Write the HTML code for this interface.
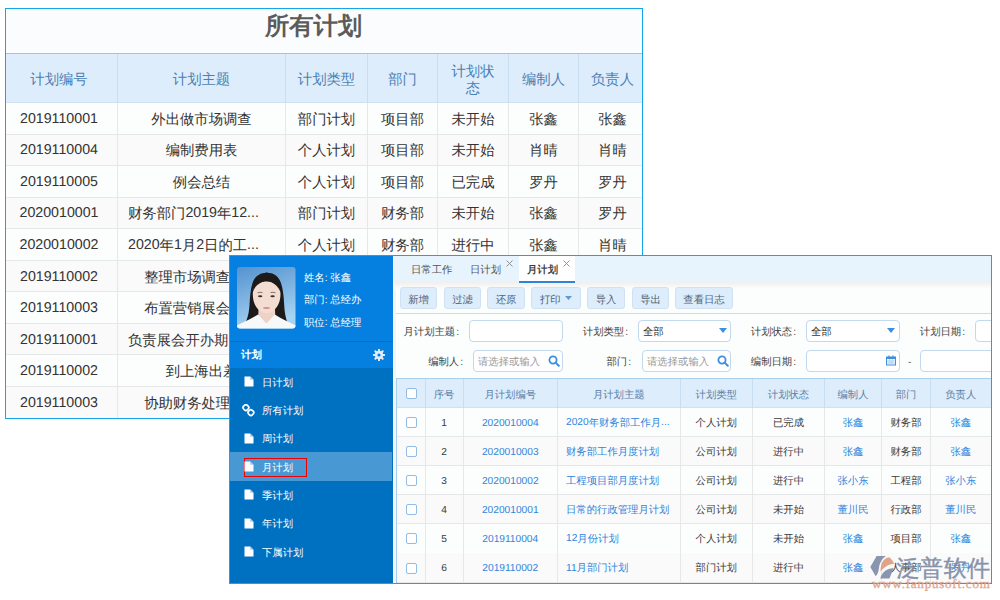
<!DOCTYPE html><html><head><meta charset="utf-8"><style>
*{margin:0;padding:0;box-sizing:border-box}
html,body{width:1000px;height:600px;overflow:hidden;background:#fff;font-family:"Liberation Sans", sans-serif;text-rendering:geometricPrecision}
.a{position:absolute}
.c{position:absolute;display:flex;align-items:center;justify-content:center;white-space:nowrap;text-align:center}
.l{position:absolute;display:flex;align-items:center;white-space:nowrap}
.r{position:absolute;display:flex;align-items:center;justify-content:flex-end;white-space:nowrap}
</style></head><body>

<div class="a" style="left:5.00px;top:8.00px;width:638.00px;height:411.00px;background:#fbfcfd;border:1px solid #14a6ea"></div>
<div class="c" style="left:6.00px;top:3.30px;width:615px;height:44.00px;font-size:24.3px;color:#5b5b5b;font-weight:bold"><span><span style="font-size:24.3px;letter-spacing:0px;position:relative;top:1.5px">所有计划</span></span></div>
<div class="a" style="left:6.00px;top:53.00px;width:636.00px;height:1.00px;background:#98c6ec;"></div>
<div class="a" style="left:6.00px;top:54.00px;width:636.00px;height:48.00px;background:#deedfb;"></div>
<div class="a" style="left:6.00px;top:102.00px;width:636.00px;height:1.00px;background:#d0e2f2;"></div>
<div class="a" style="left:6.00px;top:102.50px;width:636.00px;height:31.56px;background:#fcfdfd;"></div>
<div class="a" style="left:6.00px;top:134.06px;width:636.00px;height:31.56px;background:#fafafa;"></div>
<div class="a" style="left:6.00px;top:133.56px;width:636.00px;height:1.00px;background:#e6e7e8;"></div>
<div class="a" style="left:6.00px;top:165.62px;width:636.00px;height:31.56px;background:#fcfdfd;"></div>
<div class="a" style="left:6.00px;top:165.12px;width:636.00px;height:1.00px;background:#e6e7e8;"></div>
<div class="a" style="left:6.00px;top:197.18px;width:636.00px;height:31.56px;background:#fafafa;"></div>
<div class="a" style="left:6.00px;top:196.68px;width:636.00px;height:1.00px;background:#e6e7e8;"></div>
<div class="a" style="left:6.00px;top:228.74px;width:636.00px;height:31.56px;background:#fcfdfd;"></div>
<div class="a" style="left:6.00px;top:228.24px;width:636.00px;height:1.00px;background:#e6e7e8;"></div>
<div class="a" style="left:6.00px;top:260.30px;width:636.00px;height:31.56px;background:#fafafa;"></div>
<div class="a" style="left:6.00px;top:259.80px;width:636.00px;height:1.00px;background:#e6e7e8;"></div>
<div class="a" style="left:6.00px;top:291.86px;width:636.00px;height:31.56px;background:#fcfdfd;"></div>
<div class="a" style="left:6.00px;top:291.36px;width:636.00px;height:1.00px;background:#e6e7e8;"></div>
<div class="a" style="left:6.00px;top:323.42px;width:636.00px;height:31.56px;background:#fafafa;"></div>
<div class="a" style="left:6.00px;top:322.92px;width:636.00px;height:1.00px;background:#e6e7e8;"></div>
<div class="a" style="left:6.00px;top:354.98px;width:636.00px;height:31.56px;background:#fcfdfd;"></div>
<div class="a" style="left:6.00px;top:354.48px;width:636.00px;height:1.00px;background:#e6e7e8;"></div>
<div class="a" style="left:6.00px;top:386.54px;width:636.00px;height:31.56px;background:#fafafa;"></div>
<div class="a" style="left:6.00px;top:386.04px;width:636.00px;height:1.00px;background:#e6e7e8;"></div>
<div class="a" style="left:117.00px;top:54.00px;width:1.00px;height:48.00px;background:#c8ddf0;"></div>
<div class="a" style="left:117.00px;top:103.00px;width:1.00px;height:315.00px;background:#e6e7e8;"></div>
<div class="a" style="left:285.00px;top:54.00px;width:1.00px;height:48.00px;background:#c8ddf0;"></div>
<div class="a" style="left:285.00px;top:103.00px;width:1.00px;height:315.00px;background:#e6e7e8;"></div>
<div class="a" style="left:367.00px;top:54.00px;width:1.00px;height:48.00px;background:#c8ddf0;"></div>
<div class="a" style="left:367.00px;top:103.00px;width:1.00px;height:315.00px;background:#e6e7e8;"></div>
<div class="a" style="left:437.00px;top:54.00px;width:1.00px;height:48.00px;background:#c8ddf0;"></div>
<div class="a" style="left:437.00px;top:103.00px;width:1.00px;height:315.00px;background:#e6e7e8;"></div>
<div class="a" style="left:508.00px;top:54.00px;width:1.00px;height:48.00px;background:#c8ddf0;"></div>
<div class="a" style="left:508.00px;top:103.00px;width:1.00px;height:315.00px;background:#e6e7e8;"></div>
<div class="a" style="left:578.00px;top:54.00px;width:1.00px;height:48.00px;background:#c8ddf0;"></div>
<div class="a" style="left:578.00px;top:103.00px;width:1.00px;height:315.00px;background:#e6e7e8;"></div>
<div class="c" style="left:3.50px;top:55.00px;width:111px;height:48.00px;font-size:14.2px;color:#4b7fb4;line-height:17.5px"><span><span style="font-size:14.35px;letter-spacing:0px;position:relative;top:1.5px">计划编号</span></span></div>
<div class="c" style="left:118.00px;top:55.00px;width:167px;height:48.00px;font-size:14.2px;color:#4b7fb4;line-height:17.5px"><span><span style="font-size:14.35px;letter-spacing:0px;position:relative;top:1.5px">计划主题</span></span></div>
<div class="c" style="left:286.00px;top:55.00px;width:81px;height:48.00px;font-size:14.2px;color:#4b7fb4;line-height:17.5px"><span><span style="font-size:14.35px;letter-spacing:0px;position:relative;top:1.5px">计划类型</span></span></div>
<div class="c" style="left:368.00px;top:55.00px;width:69px;height:48.00px;font-size:14.2px;color:#4b7fb4;line-height:17.5px"><span><span style="font-size:14.35px;letter-spacing:0px;position:relative;top:1.5px">部门</span></span></div>
<div class="c" style="left:438.00px;top:55.50px;width:70px;height:48.00px;font-size:14.2px;color:#4b7fb4;line-height:17.5px"><span><span style="font-size:14.35px;letter-spacing:0px;position:relative;top:1.5px">计划状</span><br><span style="font-size:14.35px;letter-spacing:0px;position:relative;top:1.5px">态</span></span></div>
<div class="c" style="left:509.00px;top:55.00px;width:69px;height:48.00px;font-size:14.2px;color:#4b7fb4;line-height:17.5px"><span><span style="font-size:14.35px;letter-spacing:0px;position:relative;top:1.5px">编制人</span></span></div>
<div class="c" style="left:581.00px;top:55.00px;width:63px;height:48.00px;font-size:14.2px;color:#4b7fb4;line-height:17.5px"><span><span style="font-size:14.35px;letter-spacing:0px;position:relative;top:1.5px">负责人</span></span></div>
<div class="c" style="left:3.50px;top:103.00px;width:111px;height:31.56px;font-size:14.2px;color:#333;"><span><span style="font-size:14.2px;position:relative;top:0.0px">2019110001</span></span></div>
<div class="c" style="left:118.00px;top:103.00px;width:167px;height:31.56px;font-size:14.2px;color:#333;"><span><span style="font-size:14.35px;letter-spacing:0px;position:relative;top:1.5px">外出做市场调查</span></span></div>
<div class="c" style="left:286.00px;top:103.00px;width:81px;height:31.56px;font-size:14.2px;color:#333;"><span><span style="font-size:14.35px;letter-spacing:0px;position:relative;top:1.5px">部门计划</span></span></div>
<div class="c" style="left:368.00px;top:103.00px;width:69px;height:31.56px;font-size:14.2px;color:#333;"><span><span style="font-size:14.35px;letter-spacing:0px;position:relative;top:1.5px">项目部</span></span></div>
<div class="c" style="left:438.00px;top:103.00px;width:70px;height:31.56px;font-size:14.2px;color:#333;"><span><span style="font-size:14.35px;letter-spacing:0px;position:relative;top:1.5px">未开始</span></span></div>
<div class="c" style="left:509.00px;top:103.00px;width:69px;height:31.56px;font-size:14.2px;color:#333;"><span><span style="font-size:14.35px;letter-spacing:0px;position:relative;top:1.5px">张鑫</span></span></div>
<div class="c" style="left:581.00px;top:103.00px;width:63px;height:31.56px;font-size:14.2px;color:#333;"><span><span style="font-size:14.35px;letter-spacing:0px;position:relative;top:1.5px">张鑫</span></span></div>
<div class="c" style="left:3.50px;top:134.56px;width:111px;height:31.56px;font-size:14.2px;color:#333;"><span><span style="font-size:14.2px;position:relative;top:0.0px">2019110004</span></span></div>
<div class="c" style="left:118.00px;top:134.56px;width:167px;height:31.56px;font-size:14.2px;color:#333;"><span><span style="font-size:14.35px;letter-spacing:0px;position:relative;top:1.5px">编制费用表</span></span></div>
<div class="c" style="left:286.00px;top:134.56px;width:81px;height:31.56px;font-size:14.2px;color:#333;"><span><span style="font-size:14.35px;letter-spacing:0px;position:relative;top:1.5px">个人计划</span></span></div>
<div class="c" style="left:368.00px;top:134.56px;width:69px;height:31.56px;font-size:14.2px;color:#333;"><span><span style="font-size:14.35px;letter-spacing:0px;position:relative;top:1.5px">项目部</span></span></div>
<div class="c" style="left:438.00px;top:134.56px;width:70px;height:31.56px;font-size:14.2px;color:#333;"><span><span style="font-size:14.35px;letter-spacing:0px;position:relative;top:1.5px">未开始</span></span></div>
<div class="c" style="left:509.00px;top:134.56px;width:69px;height:31.56px;font-size:14.2px;color:#333;"><span><span style="font-size:14.35px;letter-spacing:0px;position:relative;top:1.5px">肖晴</span></span></div>
<div class="c" style="left:581.00px;top:134.56px;width:63px;height:31.56px;font-size:14.2px;color:#333;"><span><span style="font-size:14.35px;letter-spacing:0px;position:relative;top:1.5px">肖晴</span></span></div>
<div class="c" style="left:3.50px;top:166.12px;width:111px;height:31.56px;font-size:14.2px;color:#333;"><span><span style="font-size:14.2px;position:relative;top:0.0px">2019110005</span></span></div>
<div class="c" style="left:118.00px;top:166.12px;width:167px;height:31.56px;font-size:14.2px;color:#333;"><span><span style="font-size:14.35px;letter-spacing:0px;position:relative;top:1.5px">例会总结</span></span></div>
<div class="c" style="left:286.00px;top:166.12px;width:81px;height:31.56px;font-size:14.2px;color:#333;"><span><span style="font-size:14.35px;letter-spacing:0px;position:relative;top:1.5px">个人计划</span></span></div>
<div class="c" style="left:368.00px;top:166.12px;width:69px;height:31.56px;font-size:14.2px;color:#333;"><span><span style="font-size:14.35px;letter-spacing:0px;position:relative;top:1.5px">项目部</span></span></div>
<div class="c" style="left:438.00px;top:166.12px;width:70px;height:31.56px;font-size:14.2px;color:#333;"><span><span style="font-size:14.35px;letter-spacing:0px;position:relative;top:1.5px">已完成</span></span></div>
<div class="c" style="left:509.00px;top:166.12px;width:69px;height:31.56px;font-size:14.2px;color:#333;"><span><span style="font-size:14.35px;letter-spacing:0px;position:relative;top:1.5px">罗丹</span></span></div>
<div class="c" style="left:581.00px;top:166.12px;width:63px;height:31.56px;font-size:14.2px;color:#333;"><span><span style="font-size:14.35px;letter-spacing:0px;position:relative;top:1.5px">罗丹</span></span></div>
<div class="c" style="left:3.50px;top:197.68px;width:111px;height:31.56px;font-size:14.2px;color:#333;"><span><span style="font-size:14.2px;position:relative;top:0.0px">2020010001</span></span></div>
<div class="l" style="left:128.00px;top:197.68px;height:31.56px;font-size:14.2px;color:#333;"><span><span style="font-size:14.35px;letter-spacing:0px;position:relative;top:1.5px">财务部门</span><span style="font-size:14.2px;position:relative;top:0.0px">2019</span><span style="font-size:14.35px;letter-spacing:0px;position:relative;top:1.5px">年</span><span style="font-size:14.2px;position:relative;top:0.0px">12...</span></span></div>
<div class="c" style="left:286.00px;top:197.68px;width:81px;height:31.56px;font-size:14.2px;color:#333;"><span><span style="font-size:14.35px;letter-spacing:0px;position:relative;top:1.5px">部门计划</span></span></div>
<div class="c" style="left:368.00px;top:197.68px;width:69px;height:31.56px;font-size:14.2px;color:#333;"><span><span style="font-size:14.35px;letter-spacing:0px;position:relative;top:1.5px">财务部</span></span></div>
<div class="c" style="left:438.00px;top:197.68px;width:70px;height:31.56px;font-size:14.2px;color:#333;"><span><span style="font-size:14.35px;letter-spacing:0px;position:relative;top:1.5px">未开始</span></span></div>
<div class="c" style="left:509.00px;top:197.68px;width:69px;height:31.56px;font-size:14.2px;color:#333;"><span><span style="font-size:14.35px;letter-spacing:0px;position:relative;top:1.5px">张鑫</span></span></div>
<div class="c" style="left:581.00px;top:197.68px;width:63px;height:31.56px;font-size:14.2px;color:#333;"><span><span style="font-size:14.35px;letter-spacing:0px;position:relative;top:1.5px">罗丹</span></span></div>
<div class="c" style="left:3.50px;top:229.24px;width:111px;height:31.56px;font-size:14.2px;color:#333;"><span><span style="font-size:14.2px;position:relative;top:0.0px">2020010002</span></span></div>
<div class="l" style="left:128.00px;top:229.24px;height:31.56px;font-size:14.2px;color:#333;"><span><span style="font-size:14.2px;position:relative;top:0.0px">2020</span><span style="font-size:14.35px;letter-spacing:0px;position:relative;top:1.5px">年</span><span style="font-size:14.2px;position:relative;top:0.0px">1</span><span style="font-size:14.35px;letter-spacing:0px;position:relative;top:1.5px">月</span><span style="font-size:14.2px;position:relative;top:0.0px">2</span><span style="font-size:14.35px;letter-spacing:0px;position:relative;top:1.5px">日的工</span><span style="font-size:14.2px;position:relative;top:0.0px">...</span></span></div>
<div class="c" style="left:286.00px;top:229.24px;width:81px;height:31.56px;font-size:14.2px;color:#333;"><span><span style="font-size:14.35px;letter-spacing:0px;position:relative;top:1.5px">个人计划</span></span></div>
<div class="c" style="left:368.00px;top:229.24px;width:69px;height:31.56px;font-size:14.2px;color:#333;"><span><span style="font-size:14.35px;letter-spacing:0px;position:relative;top:1.5px">财务部</span></span></div>
<div class="c" style="left:438.00px;top:229.24px;width:70px;height:31.56px;font-size:14.2px;color:#333;"><span><span style="font-size:14.35px;letter-spacing:0px;position:relative;top:1.5px">进行中</span></span></div>
<div class="c" style="left:509.00px;top:229.24px;width:69px;height:31.56px;font-size:14.2px;color:#333;"><span><span style="font-size:14.35px;letter-spacing:0px;position:relative;top:1.5px">张鑫</span></span></div>
<div class="c" style="left:581.00px;top:229.24px;width:63px;height:31.56px;font-size:14.2px;color:#333;"><span><span style="font-size:14.35px;letter-spacing:0px;position:relative;top:1.5px">肖晴</span></span></div>
<div class="c" style="left:3.50px;top:260.80px;width:111px;height:31.56px;font-size:14.2px;color:#333;"><span><span style="font-size:14.2px;position:relative;top:0.0px">2019110002</span></span></div>
<div class="c" style="left:118.00px;top:260.80px;width:167px;height:31.56px;font-size:14.2px;color:#333;"><span><span style="font-size:14.35px;letter-spacing:0px;position:relative;top:1.5px">整理市场调查报告</span></span></div>
<div class="c" style="left:286.00px;top:260.80px;width:81px;height:31.56px;font-size:14.2px;color:#333;"><span><span style="font-size:14.35px;letter-spacing:0px;position:relative;top:1.5px">部门计划</span></span></div>
<div class="c" style="left:368.00px;top:260.80px;width:69px;height:31.56px;font-size:14.2px;color:#333;"><span><span style="font-size:14.35px;letter-spacing:0px;position:relative;top:1.5px">项目部</span></span></div>
<div class="c" style="left:438.00px;top:260.80px;width:70px;height:31.56px;font-size:14.2px;color:#333;"><span><span style="font-size:14.35px;letter-spacing:0px;position:relative;top:1.5px">进行中</span></span></div>
<div class="c" style="left:509.00px;top:260.80px;width:69px;height:31.56px;font-size:14.2px;color:#333;"><span><span style="font-size:14.35px;letter-spacing:0px;position:relative;top:1.5px">张鑫</span></span></div>
<div class="c" style="left:581.00px;top:260.80px;width:63px;height:31.56px;font-size:14.2px;color:#333;"><span><span style="font-size:14.35px;letter-spacing:0px;position:relative;top:1.5px">张鑫</span></span></div>
<div class="c" style="left:3.50px;top:292.36px;width:111px;height:31.56px;font-size:14.2px;color:#333;"><span><span style="font-size:14.2px;position:relative;top:0.0px">2019110003</span></span></div>
<div class="c" style="left:118.00px;top:292.36px;width:167px;height:31.56px;font-size:14.2px;color:#333;"><span><span style="font-size:14.35px;letter-spacing:0px;position:relative;top:1.5px">布置营销展会场地</span></span></div>
<div class="c" style="left:286.00px;top:292.36px;width:81px;height:31.56px;font-size:14.2px;color:#333;"><span><span style="font-size:14.35px;letter-spacing:0px;position:relative;top:1.5px">部门计划</span></span></div>
<div class="c" style="left:368.00px;top:292.36px;width:69px;height:31.56px;font-size:14.2px;color:#333;"><span><span style="font-size:14.35px;letter-spacing:0px;position:relative;top:1.5px">项目部</span></span></div>
<div class="c" style="left:438.00px;top:292.36px;width:70px;height:31.56px;font-size:14.2px;color:#333;"><span><span style="font-size:14.35px;letter-spacing:0px;position:relative;top:1.5px">未开始</span></span></div>
<div class="c" style="left:509.00px;top:292.36px;width:69px;height:31.56px;font-size:14.2px;color:#333;"><span><span style="font-size:14.35px;letter-spacing:0px;position:relative;top:1.5px">肖晴</span></span></div>
<div class="c" style="left:581.00px;top:292.36px;width:63px;height:31.56px;font-size:14.2px;color:#333;"><span><span style="font-size:14.35px;letter-spacing:0px;position:relative;top:1.5px">肖晴</span></span></div>
<div class="c" style="left:3.50px;top:323.92px;width:111px;height:31.56px;font-size:14.2px;color:#333;"><span><span style="font-size:14.2px;position:relative;top:0.0px">2019110001</span></span></div>
<div class="l" style="left:128.00px;top:323.92px;height:31.56px;font-size:14.2px;color:#333;"><span><span style="font-size:14.35px;letter-spacing:0px;position:relative;top:1.5px">负责展会开办期</span><span style="font-size:14.2px;position:relative;top:0.0px">...</span></span></div>
<div class="c" style="left:286.00px;top:323.92px;width:81px;height:31.56px;font-size:14.2px;color:#333;"><span><span style="font-size:14.35px;letter-spacing:0px;position:relative;top:1.5px">部门计划</span></span></div>
<div class="c" style="left:368.00px;top:323.92px;width:69px;height:31.56px;font-size:14.2px;color:#333;"><span><span style="font-size:14.35px;letter-spacing:0px;position:relative;top:1.5px">项目部</span></span></div>
<div class="c" style="left:438.00px;top:323.92px;width:70px;height:31.56px;font-size:14.2px;color:#333;"><span><span style="font-size:14.35px;letter-spacing:0px;position:relative;top:1.5px">未开始</span></span></div>
<div class="c" style="left:509.00px;top:323.92px;width:69px;height:31.56px;font-size:14.2px;color:#333;"><span><span style="font-size:14.35px;letter-spacing:0px;position:relative;top:1.5px">张鑫</span></span></div>
<div class="c" style="left:581.00px;top:323.92px;width:63px;height:31.56px;font-size:14.2px;color:#333;"><span><span style="font-size:14.35px;letter-spacing:0px;position:relative;top:1.5px">张鑫</span></span></div>
<div class="c" style="left:3.50px;top:355.48px;width:111px;height:31.56px;font-size:14.2px;color:#333;"><span><span style="font-size:14.2px;position:relative;top:0.0px">2019110002</span></span></div>
<div class="c" style="left:118.00px;top:355.48px;width:167px;height:31.56px;font-size:14.2px;color:#333;"><span><span style="font-size:14.35px;letter-spacing:0px;position:relative;top:1.5px">到上海出差</span></span></div>
<div class="c" style="left:286.00px;top:355.48px;width:81px;height:31.56px;font-size:14.2px;color:#333;"><span><span style="font-size:14.35px;letter-spacing:0px;position:relative;top:1.5px">个人计划</span></span></div>
<div class="c" style="left:368.00px;top:355.48px;width:69px;height:31.56px;font-size:14.2px;color:#333;"><span><span style="font-size:14.35px;letter-spacing:0px;position:relative;top:1.5px">项目部</span></span></div>
<div class="c" style="left:438.00px;top:355.48px;width:70px;height:31.56px;font-size:14.2px;color:#333;"><span><span style="font-size:14.35px;letter-spacing:0px;position:relative;top:1.5px">已完成</span></span></div>
<div class="c" style="left:509.00px;top:355.48px;width:69px;height:31.56px;font-size:14.2px;color:#333;"><span><span style="font-size:14.35px;letter-spacing:0px;position:relative;top:1.5px">罗丹</span></span></div>
<div class="c" style="left:581.00px;top:355.48px;width:63px;height:31.56px;font-size:14.2px;color:#333;"><span><span style="font-size:14.35px;letter-spacing:0px;position:relative;top:1.5px">罗丹</span></span></div>
<div class="c" style="left:3.50px;top:387.04px;width:111px;height:31.56px;font-size:14.2px;color:#333;"><span><span style="font-size:14.2px;position:relative;top:0.0px">2019110003</span></span></div>
<div class="c" style="left:118.00px;top:387.04px;width:167px;height:31.56px;font-size:14.2px;color:#333;"><span><span style="font-size:14.35px;letter-spacing:0px;position:relative;top:1.5px">协助财务处理账务</span></span></div>
<div class="c" style="left:286.00px;top:387.04px;width:81px;height:31.56px;font-size:14.2px;color:#333;"><span><span style="font-size:14.35px;letter-spacing:0px;position:relative;top:1.5px">个人计划</span></span></div>
<div class="c" style="left:368.00px;top:387.04px;width:69px;height:31.56px;font-size:14.2px;color:#333;"><span><span style="font-size:14.35px;letter-spacing:0px;position:relative;top:1.5px">财务部</span></span></div>
<div class="c" style="left:438.00px;top:387.04px;width:70px;height:31.56px;font-size:14.2px;color:#333;"><span><span style="font-size:14.35px;letter-spacing:0px;position:relative;top:1.5px">进行中</span></span></div>
<div class="c" style="left:509.00px;top:387.04px;width:69px;height:31.56px;font-size:14.2px;color:#333;"><span><span style="font-size:14.35px;letter-spacing:0px;position:relative;top:1.5px">肖晴</span></span></div>
<div class="c" style="left:581.00px;top:387.04px;width:63px;height:31.56px;font-size:14.2px;color:#333;"><span><span style="font-size:14.35px;letter-spacing:0px;position:relative;top:1.5px">肖晴</span></span></div>
<div class="a" style="left:229.00px;top:255.00px;width:763.00px;height:329.00px;background:#fcfdfd;border:1px solid #14a6ea"></div>
<div class="a" style="left:230.00px;top:256.00px;width:163.00px;height:85.00px;background:#0680e0;"></div>
<div class="a" style="left:230.00px;top:341.00px;width:163.00px;height:1.00px;background:#0b6cc0;"></div>
<div class="a" style="left:230.00px;top:342.00px;width:163.00px;height:25.50px;background:#0680e0;"></div>
<div class="a" style="left:230.00px;top:367.50px;width:163.00px;height:215.50px;background:#0070c0;"></div>
<div class="a" style="left:393.00px;top:256.00px;width:1.00px;height:327.00px;background:#ffffff;"></div>
<div class="a" style="left:394.00px;top:256.00px;width:2.00px;height:327.00px;background:#eef5fb;"></div>
<svg class="a" style="left:237px;top:267px" width="59" height="62" viewBox="0 0 59 62">
<defs><linearGradient id="pg" x1="0" y1="0" x2="0.3" y2="1"><stop offset="0" stop-color="#5592cf"/><stop offset="1" stop-color="#a6d4f3"/></linearGradient>
<clipPath id="pc"><rect x="0" y="0" width="58.5" height="61.5" rx="3"/></clipPath></defs>
<g clip-path="url(#pc)">
<rect width="59" height="62" fill="url(#pg)"/>
<path d="M30 5.7 C22 5.7 17.5 10 15.5 16 C13.5 22 13 30 12.5 38 C12 46 10.5 51 8.5 56 L50.5 56 C48.5 50 47.5 45 47.2 38 C46.8 30 46 22 44 16 C42 10 38 5.7 30 5.7Z" fill="#1d1a1a"/>
<path d="M21.5 42 L21 57 L38.5 57 L38 42Z" fill="#efd2c6"/>
<path d="M15.8 27 C15.8 19 21 14.5 29.5 14.5 C38 14.5 43.5 19 43.5 27 C43.5 34 41 41 35 44.5 C32 46.5 27 46.5 24 44.5 C18 41 15.8 34 15.8 27Z" fill="#f3dcd2"/>
<path d="M30 5.5 C23 7 18 12 15.8 25 C18 19 22 15.5 30 13.5Z M29.5 5.5 C36 7 41.5 12 43.5 25 C41 19 37 15.5 29.5 13.5Z" fill="#1d1a1a"/>
<path d="M20.5 25.8 Q23 24.8 25.5 25.6 M33.5 25.6 Q36 24.8 38.5 25.8" stroke="#6a5550" stroke-width="0.8" fill="none"/>
<ellipse cx="23.2" cy="29.2" rx="2.2" ry="1" fill="#3b2c28"/>
<ellipse cx="35.6" cy="29.2" rx="2.2" ry="1" fill="#3b2c28"/>
<ellipse cx="29.5" cy="41" rx="3.4" ry="1.1" fill="#dc8e94"/>
<path d="M0 62 L0 58.5 C6 55 14 52 21 47.5 L29.4 56.5 L37.8 47.5 C45 52 52 55 59 58.5 L59 62Z" fill="#f7f8fa"/>
</g></svg>
<div class="l" style="left:304.00px;top:269.50px;height:16.00px;font-size:10.2px;color:#fff;"><span><span style="font-size:10.35px;letter-spacing:0px;position:relative;top:1.6px">姓名</span><span style="font-size:10.2px;position:relative;top:1.0px">: </span><span style="font-size:10.35px;letter-spacing:0px;position:relative;top:1.6px">张鑫</span></span></div>
<div class="l" style="left:304.00px;top:291.80px;height:16.00px;font-size:10.2px;color:#fff;"><span><span style="font-size:10.35px;letter-spacing:0px;position:relative;top:1.6px">部门</span><span style="font-size:10.2px;position:relative;top:1.0px">: </span><span style="font-size:10.35px;letter-spacing:0px;position:relative;top:1.6px">总经办</span></span></div>
<div class="l" style="left:304.00px;top:314.00px;height:16.00px;font-size:10.2px;color:#fff;"><span><span style="font-size:10.35px;letter-spacing:0px;position:relative;top:1.6px">职位</span><span style="font-size:10.2px;position:relative;top:1.0px">: </span><span style="font-size:10.35px;letter-spacing:0px;position:relative;top:1.6px">总经理</span></span></div>
<div class="l" style="left:241.00px;top:341.80px;height:26.00px;font-size:10.4px;color:#fff;font-weight:bold"><span><span style="font-size:10.4px;letter-spacing:0px;position:relative;top:1.6px">计划</span></span></div>
<svg class="a" style="left:373px;top:349px" width="12" height="12" viewBox="0 0 12 12"><g fill="#e2edf9">
<circle cx="6" cy="6" r="4.2"/>
<g stroke="#e2edf9" stroke-width="2" stroke-linecap="round">
<line x1="6" y1="0.8" x2="6" y2="11.2"/><line x1="0.8" y1="6" x2="11.2" y2="6"/>
<line x1="2.3" y1="2.3" x2="9.7" y2="9.7"/><line x1="9.7" y1="2.3" x2="2.3" y2="9.7"/></g>
<circle cx="6" cy="6" r="1.6" fill="#0680e0"/></g></svg>
<svg class="a" style="left:244.3px;top:376.00px" width="10" height="11" viewBox="0 0 10 11"><path d="M0.5 0.5 H6.2 L9.5 3.8 V10.5 H0.5Z" fill="#fff"/><path d="M6.2 0.5 V3.8 H9.5Z" fill="#a9c9ec"/></svg>
<div class="l" style="left:262.00px;top:368.00px;height:28.30px;font-size:10.2px;color:#fff;"><span><span style="font-size:10.35px;letter-spacing:0px;position:relative;top:1.6px">日计划</span></span></div>
<svg class="a" style="left:242px;top:404.00px" width="13" height="13" viewBox="0 0 13 13"><g fill="none" stroke="#fff" stroke-width="1.7"><rect x="1.3" y="1" width="5.2" height="5.2" rx="2" transform="rotate(45 3.9 3.6)"/><rect x="6.3" y="6" width="5.2" height="5.2" rx="2" transform="rotate(45 8.9 8.6)"/></g></svg>
<div class="l" style="left:262.00px;top:396.30px;height:28.30px;font-size:10.2px;color:#fff;"><span><span style="font-size:10.35px;letter-spacing:0px;position:relative;top:1.6px">所有计划</span></span></div>
<svg class="a" style="left:244.3px;top:432.60px" width="10" height="11" viewBox="0 0 10 11"><path d="M0.5 0.5 H6.2 L9.5 3.8 V10.5 H0.5Z" fill="#fff"/><path d="M6.2 0.5 V3.8 H9.5Z" fill="#a9c9ec"/></svg>
<div class="l" style="left:262.00px;top:424.60px;height:28.30px;font-size:10.2px;color:#fff;"><span><span style="font-size:10.35px;letter-spacing:0px;position:relative;top:1.6px">周计划</span></span></div>
<div class="a" style="left:230.00px;top:452.40px;width:162.00px;height:28.30px;background:#4898d4;"></div>
<div class="a" style="left:244.00px;top:458.00px;width:63.00px;height:19.00px;background:transparent;border:1.4px solid #f00000"></div>
<svg class="a" style="left:244.3px;top:460.90px" width="10" height="11" viewBox="0 0 10 11"><path d="M0.5 0.5 H6.2 L9.5 3.8 V10.5 H0.5Z" fill="#fff"/><path d="M6.2 0.5 V3.8 H9.5Z" fill="#a9c9ec"/></svg>
<div class="l" style="left:262.00px;top:452.90px;height:28.30px;font-size:10.2px;color:#fff;"><span><span style="font-size:10.35px;letter-spacing:0px;position:relative;top:1.6px">月计划</span></span></div>
<svg class="a" style="left:244.3px;top:489.20px" width="10" height="11" viewBox="0 0 10 11"><path d="M0.5 0.5 H6.2 L9.5 3.8 V10.5 H0.5Z" fill="#fff"/><path d="M6.2 0.5 V3.8 H9.5Z" fill="#a9c9ec"/></svg>
<div class="l" style="left:262.00px;top:481.20px;height:28.30px;font-size:10.2px;color:#fff;"><span><span style="font-size:10.35px;letter-spacing:0px;position:relative;top:1.6px">季计划</span></span></div>
<svg class="a" style="left:244.3px;top:517.50px" width="10" height="11" viewBox="0 0 10 11"><path d="M0.5 0.5 H6.2 L9.5 3.8 V10.5 H0.5Z" fill="#fff"/><path d="M6.2 0.5 V3.8 H9.5Z" fill="#a9c9ec"/></svg>
<div class="l" style="left:262.00px;top:509.50px;height:28.30px;font-size:10.2px;color:#fff;"><span><span style="font-size:10.35px;letter-spacing:0px;position:relative;top:1.6px">年计划</span></span></div>
<svg class="a" style="left:244.3px;top:545.80px" width="10" height="11" viewBox="0 0 10 11"><path d="M0.5 0.5 H6.2 L9.5 3.8 V10.5 H0.5Z" fill="#fff"/><path d="M6.2 0.5 V3.8 H9.5Z" fill="#a9c9ec"/></svg>
<div class="l" style="left:262.00px;top:537.80px;height:28.30px;font-size:10.2px;color:#fff;"><span><span style="font-size:10.35px;letter-spacing:0px;position:relative;top:1.6px">下属计划</span></span></div>
<div class="a" style="left:394.00px;top:256.00px;width:597.00px;height:26.00px;background:#e8f4fd;"></div>
<div class="a" style="left:394.00px;top:282.00px;width:597.00px;height:7.00px;background:linear-gradient(#f1efed,#fcfdfd);"></div>
<div class="a" style="left:519.00px;top:256.00px;width:56.00px;height:26.00px;background:#fff;"></div>
<div class="a" style="left:519.00px;top:281.00px;width:56.00px;height:2.00px;background:#2f84d6;"></div>
<div class="l" style="left:411.00px;top:256.50px;height:26.00px;font-size:10.2px;color:#555;"><span><span style="font-size:10.35px;letter-spacing:0px;position:relative;top:1.6px">日常工作</span></span></div>
<div class="l" style="left:470.00px;top:256.50px;height:26.00px;font-size:10.2px;color:#555;"><span><span style="font-size:10.35px;letter-spacing:0px;position:relative;top:1.6px">日计划</span></span></div>
<div class="l" style="left:527.00px;top:256.50px;height:26.00px;font-size:10.2px;color:#2a2a2a;-webkit-text-stroke:0.25px #2a2a2a"><span><span style="font-size:10.35px;letter-spacing:0px;position:relative;top:1.6px">月计划</span></span></div>
<svg class="a" style="left:506px;top:259.5px" width="7" height="7" viewBox="0 0 7 7"><path d="M0.5 0.5 L6.5 6.5 M6.5 0.5 L0.5 6.5" stroke="#888" stroke-width="0.9"/></svg>
<svg class="a" style="left:563px;top:259.5px" width="7" height="7" viewBox="0 0 7 7"><path d="M0.5 0.5 L6.5 6.5 M6.5 0.5 L0.5 6.5" stroke="#888" stroke-width="0.9"/></svg>
<div class="a" style="left:400.00px;top:287.00px;width:37.00px;height:22.00px;background:#deedfb;border:1px solid #cfe2f4;border-radius:3px"></div>
<div class="c" style="left:400.00px;top:288.00px;width:37px;height:22.00px;font-size:10.2px;color:#4f6377;"><span><span style="font-size:10.35px;letter-spacing:0px;position:relative;top:1.6px">新增</span></span></div>
<div class="a" style="left:444.00px;top:287.00px;width:37.00px;height:22.00px;background:#deedfb;border:1px solid #cfe2f4;border-radius:3px"></div>
<div class="c" style="left:444.00px;top:288.00px;width:37px;height:22.00px;font-size:10.2px;color:#4f6377;"><span><span style="font-size:10.35px;letter-spacing:0px;position:relative;top:1.6px">过滤</span></span></div>
<div class="a" style="left:487.00px;top:287.00px;width:38.00px;height:22.00px;background:#deedfb;border:1px solid #cfe2f4;border-radius:3px"></div>
<div class="c" style="left:487.00px;top:288.00px;width:38px;height:22.00px;font-size:10.2px;color:#4f6377;"><span><span style="font-size:10.35px;letter-spacing:0px;position:relative;top:1.6px">还原</span></span></div>
<div class="a" style="left:531.00px;top:287.00px;width:50.00px;height:22.00px;background:#deedfb;border:1px solid #cfe2f4;border-radius:3px"></div>
<div class="l" style="left:540.00px;top:288.00px;height:22.00px;font-size:10.2px;color:#4f6377;"><span><span style="font-size:10.35px;letter-spacing:0px;position:relative;top:1.6px">打印</span></span></div>
<svg class="a" style="left:564.5px;top:296px" width="7" height="4" viewBox="0 0 7 4"><path d="M0 0 H7 L3.5 4Z" fill="#5b9bd9"/></svg>
<div class="a" style="left:587.00px;top:287.00px;width:38.00px;height:22.00px;background:#deedfb;border:1px solid #cfe2f4;border-radius:3px"></div>
<div class="c" style="left:587.00px;top:288.00px;width:38px;height:22.00px;font-size:10.2px;color:#4f6377;"><span><span style="font-size:10.35px;letter-spacing:0px;position:relative;top:1.6px">导入</span></span></div>
<div class="a" style="left:632.00px;top:287.00px;width:37.00px;height:22.00px;background:#deedfb;border:1px solid #cfe2f4;border-radius:3px"></div>
<div class="c" style="left:632.00px;top:288.00px;width:37px;height:22.00px;font-size:10.2px;color:#4f6377;"><span><span style="font-size:10.35px;letter-spacing:0px;position:relative;top:1.6px">导出</span></span></div>
<div class="a" style="left:675.00px;top:287.00px;width:58.00px;height:22.00px;background:#deedfb;border:1px solid #cfe2f4;border-radius:3px"></div>
<div class="c" style="left:675.00px;top:288.00px;width:58px;height:22.00px;font-size:10.2px;color:#4f6377;"><span><span style="font-size:10.35px;letter-spacing:0px;position:relative;top:1.6px">查看日志</span></span></div>
<div class="a" style="left:396.00px;top:313.00px;width:595.00px;height:1.00px;background:#c9dcee;"></div>
<div class="r" style="left:379.00px;top:324.50px;width:80px;height:16px;font-size:10.2px;color:#444"><span><span style="font-size:10.35px">月计划主题</span><span style="margin-left:1px">:</span></span></div>
<div class="a" style="left:469.00px;top:320.00px;width:94.00px;height:21.50px;background:#fff;border:1px solid #c2d8ed;border-radius:4px"></div>
<div class="r" style="left:383.00px;top:354.50px;width:80px;height:16px;font-size:10.2px;color:#444"><span><span style="font-size:10.35px">编制人</span><span style="margin-left:1px">:</span></span></div>
<div class="a" style="left:473.00px;top:350.00px;width:90.00px;height:21.50px;background:#fff;border:1px solid #c2d8ed;border-radius:4px"></div>
<div class="l" style="left:478.00px;top:353.50px;height:16.00px;font-size:10.2px;color:#999;"><span><span style="font-size:10.35px;letter-spacing:0px;position:relative;top:1.6px">请选择或输入</span></span></div>
<div class="r" style="left:548.00px;top:324.50px;width:80px;height:16px;font-size:10.2px;color:#444"><span><span style="font-size:10.35px">计划类型</span><span style="margin-left:1px">:</span></span></div>
<div class="a" style="left:638.00px;top:320.00px;width:93.00px;height:21.50px;background:#fff;border:1px solid #c2d8ed;border-radius:4px"></div>
<div class="l" style="left:643.00px;top:323.50px;height:16.00px;font-size:10.2px;color:#333;"><span><span style="font-size:10.35px;letter-spacing:0px;position:relative;top:1.6px">全部</span></span></div>
<div class="r" style="left:551.00px;top:354.50px;width:80px;height:16px;font-size:10.2px;color:#444"><span><span style="font-size:10.35px">部门</span><span style="margin-left:1px">:</span></span></div>
<div class="a" style="left:642.00px;top:350.00px;width:89.00px;height:21.50px;background:#fff;border:1px solid #c2d8ed;border-radius:4px"></div>
<div class="l" style="left:647.00px;top:353.50px;height:16.00px;font-size:10.2px;color:#999;"><span><span style="font-size:10.35px;letter-spacing:0px;position:relative;top:1.6px">请选择或输入</span></span></div>
<div class="r" style="left:716.00px;top:324.50px;width:80px;height:16px;font-size:10.2px;color:#444"><span><span style="font-size:10.35px">计划状态</span><span style="margin-left:1px">:</span></span></div>
<div class="a" style="left:806.00px;top:320.00px;width:94.00px;height:21.50px;background:#fff;border:1px solid #c2d8ed;border-radius:4px"></div>
<div class="l" style="left:811.00px;top:323.50px;height:16.00px;font-size:10.2px;color:#333;"><span><span style="font-size:10.35px;letter-spacing:0px;position:relative;top:1.6px">全部</span></span></div>
<div class="r" style="left:885.00px;top:324.50px;width:80px;height:16px;font-size:10.2px;color:#444"><span><span style="font-size:10.35px">计划日期</span><span style="margin-left:1px">:</span></span></div>
<div class="a" style="left:975.00px;top:320.00px;width:24.00px;height:21.50px;background:#fff;border:1px solid #c2d8ed;border-radius:4px"></div>
<div class="r" style="left:716.00px;top:354.50px;width:80px;height:16px;font-size:10.2px;color:#444"><span><span style="font-size:10.35px">编制日期</span><span style="margin-left:1px">:</span></span></div>
<div class="a" style="left:806.00px;top:350.00px;width:94.00px;height:21.50px;background:#fff;border:1px solid #c2d8ed;border-radius:4px"></div>
<div class="l" style="left:908.00px;top:353.50px;height:16.00px;font-size:10.2px;color:#555;"><span><span style="font-size:10.2px;position:relative;top:1.0px">-</span></span></div>
<div class="a" style="left:920.00px;top:350.00px;width:79.00px;height:21.50px;background:#fff;border:1px solid #c2d8ed;border-radius:4px"></div>
<svg class="a" style="left:719px;top:328px" width="8" height="5" viewBox="0 0 8 5"><path d="M0 0 H8 L4 5Z" fill="#3d8fe0"/></svg>
<svg class="a" style="left:887px;top:328px" width="8" height="5" viewBox="0 0 8 5"><path d="M0 0 H8 L4 5Z" fill="#3d8fe0"/></svg>
<svg class="a" style="left:547.5px;top:354.5px" width="12" height="12" viewBox="0 0 12 12"><circle cx="5" cy="5" r="3.6" fill="none" stroke="#3d8fe0" stroke-width="1.8"/><path d="M7.6 7.6 L10.8 10.8" stroke="#3d8fe0" stroke-width="2" stroke-linecap="round"/></svg>
<svg class="a" style="left:716.5px;top:354.5px" width="12" height="12" viewBox="0 0 12 12"><circle cx="5" cy="5" r="3.6" fill="none" stroke="#3d8fe0" stroke-width="1.8"/><path d="M7.6 7.6 L10.8 10.8" stroke="#3d8fe0" stroke-width="2" stroke-linecap="round"/></svg>
<svg class="a" style="left:886px;top:355px" width="10" height="11" viewBox="0 0 10 11"><rect x="0.5" y="2" width="9" height="8" fill="#fff" stroke="#3d8fe0" stroke-width="1"/><rect x="0.5" y="2" width="9" height="2" fill="#3d8fe0"/><path d="M3 0.5 V3 M7 0.5 V3" stroke="#3d8fe0" stroke-width="1.2"/><path d="M1 6 H9 M1 8 H9 M3.2 4 V10 M5 4 V10 M6.8 4 V10" stroke="#9cc5ee" stroke-width="0.7"/></svg>
<div class="a" style="left:992.00px;top:255.00px;width:8.00px;height:330.00px;background:#fff;"></div>
<div class="a" style="left:991.00px;top:255.00px;width:1.00px;height:329.00px;background:#14a6ea;"></div>
<div class="a" style="left:396.00px;top:378.00px;width:595.00px;height:1.00px;background:#a8cfee;"></div>
<div class="a" style="left:396.00px;top:378.00px;width:1.00px;height:205.00px;background:#a8cfee;"></div>
<div class="a" style="left:397.00px;top:379.00px;width:594.00px;height:28.50px;background:#deedfb;"></div>
<div class="a" style="left:397.00px;top:407.00px;width:594.00px;height:1.00px;background:#cfe1f2;"></div>
<div class="a" style="left:397.00px;top:407.50px;width:594.00px;height:29.10px;background:#fcfdfd;"></div>
<div class="a" style="left:397.00px;top:436.10px;width:594.00px;height:1.00px;background:#e6e7e8;"></div>
<div class="a" style="left:397.00px;top:436.60px;width:594.00px;height:29.10px;background:#fafafa;"></div>
<div class="a" style="left:397.00px;top:465.20px;width:594.00px;height:1.00px;background:#e6e7e8;"></div>
<div class="a" style="left:397.00px;top:465.70px;width:594.00px;height:29.10px;background:#fcfdfd;"></div>
<div class="a" style="left:397.00px;top:494.30px;width:594.00px;height:1.00px;background:#e6e7e8;"></div>
<div class="a" style="left:397.00px;top:494.80px;width:594.00px;height:29.10px;background:#fafafa;"></div>
<div class="a" style="left:397.00px;top:523.40px;width:594.00px;height:1.00px;background:#e6e7e8;"></div>
<div class="a" style="left:397.00px;top:523.90px;width:594.00px;height:29.10px;background:#fcfdfd;"></div>
<div class="a" style="left:397.00px;top:552.50px;width:594.00px;height:1.00px;background:#e6e7e8;"></div>
<div class="a" style="left:397.00px;top:553.00px;width:594.00px;height:29.10px;background:#fafafa;"></div>
<div class="a" style="left:397.00px;top:581.60px;width:594.00px;height:1.00px;background:#e6e7e8;"></div>
<div class="a" style="left:424.50px;top:379.00px;width:1.00px;height:28.50px;background:#c8ddf0;"></div>
<div class="a" style="left:424.50px;top:408.00px;width:1.00px;height:175.00px;background:#e6e7e8;"></div>
<div class="a" style="left:462.50px;top:379.00px;width:1.00px;height:28.50px;background:#c8ddf0;"></div>
<div class="a" style="left:462.50px;top:408.00px;width:1.00px;height:175.00px;background:#e6e7e8;"></div>
<div class="a" style="left:557.00px;top:379.00px;width:1.00px;height:28.50px;background:#c8ddf0;"></div>
<div class="a" style="left:557.00px;top:408.00px;width:1.00px;height:175.00px;background:#e6e7e8;"></div>
<div class="a" style="left:679.50px;top:379.00px;width:1.00px;height:28.50px;background:#c8ddf0;"></div>
<div class="a" style="left:679.50px;top:408.00px;width:1.00px;height:175.00px;background:#e6e7e8;"></div>
<div class="a" style="left:752.00px;top:379.00px;width:1.00px;height:28.50px;background:#c8ddf0;"></div>
<div class="a" style="left:752.00px;top:408.00px;width:1.00px;height:175.00px;background:#e6e7e8;"></div>
<div class="a" style="left:824.00px;top:379.00px;width:1.00px;height:28.50px;background:#c8ddf0;"></div>
<div class="a" style="left:824.00px;top:408.00px;width:1.00px;height:175.00px;background:#e6e7e8;"></div>
<div class="a" style="left:881.00px;top:379.00px;width:1.00px;height:28.50px;background:#c8ddf0;"></div>
<div class="a" style="left:881.00px;top:408.00px;width:1.00px;height:175.00px;background:#e6e7e8;"></div>
<div class="a" style="left:930.00px;top:379.00px;width:1.00px;height:28.50px;background:#c8ddf0;"></div>
<div class="a" style="left:930.00px;top:408.00px;width:1.00px;height:175.00px;background:#e6e7e8;"></div>
<div class="a" style="left:406.00px;top:388.00px;width:11.00px;height:11.00px;background:#fff;border:1px solid #8fbde6;border-radius:2px"></div>
<div class="c" style="left:425.00px;top:380.20px;width:38px;height:28.50px;font-size:10.2px;color:#5a7fa8;"><span><span style="font-size:10.35px;letter-spacing:0px;position:relative;top:1.6px">序号</span></span></div>
<div class="c" style="left:463.00px;top:380.20px;width:94.5px;height:28.50px;font-size:10.2px;color:#5a7fa8;"><span><span style="font-size:10.35px;letter-spacing:0px;position:relative;top:1.6px">月计划编号</span></span></div>
<div class="c" style="left:557.50px;top:380.20px;width:122.5px;height:28.50px;font-size:10.2px;color:#5a7fa8;"><span><span style="font-size:10.35px;letter-spacing:0px;position:relative;top:1.6px">月计划主题</span></span></div>
<div class="c" style="left:680.00px;top:380.20px;width:72.5px;height:28.50px;font-size:10.2px;color:#5a7fa8;"><span><span style="font-size:10.35px;letter-spacing:0px;position:relative;top:1.6px">计划类型</span></span></div>
<div class="c" style="left:752.50px;top:380.20px;width:72.0px;height:28.50px;font-size:10.2px;color:#5a7fa8;"><span><span style="font-size:10.35px;letter-spacing:0px;position:relative;top:1.6px">计划状态</span></span></div>
<div class="c" style="left:824.50px;top:380.20px;width:57.0px;height:28.50px;font-size:10.2px;color:#5a7fa8;"><span><span style="font-size:10.35px;letter-spacing:0px;position:relative;top:1.6px">编制人</span></span></div>
<div class="c" style="left:881.50px;top:380.20px;width:49.0px;height:28.50px;font-size:10.2px;color:#5a7fa8;"><span><span style="font-size:10.35px;letter-spacing:0px;position:relative;top:1.6px">部门</span></span></div>
<div class="c" style="left:930.50px;top:380.20px;width:60.5px;height:28.50px;font-size:10.2px;color:#5a7fa8;"><span><span style="font-size:10.35px;letter-spacing:0px;position:relative;top:1.6px">负责人</span></span></div>
<div class="a" style="left:406.00px;top:417.00px;width:11.00px;height:11.00px;background:#fff;border:1px solid #8fbde6;border-radius:2px"></div>
<div class="c" style="left:425.00px;top:407.50px;width:38px;height:29.10px;font-size:10.2px;color:#3a3a3a;"><span><span style="font-size:10.2px;position:relative;top:1.0px">1</span></span></div>
<div class="c" style="left:463.00px;top:407.50px;width:94.5px;height:29.10px;font-size:10.2px;color:#2f85dc;"><span><span style="font-size:10.2px;position:relative;top:1.0px">2020010004</span></span></div>
<div class="l" style="left:566.00px;top:407.50px;height:29.10px;font-size:10.2px;color:#2f85dc;"><span><span style="font-size:10.2px;position:relative;top:1.0px">2020</span><span style="font-size:10.35px;letter-spacing:0px;position:relative;top:1.6px">年财务部工作月</span><span style="font-size:10.2px;position:relative;top:1.0px">...</span></span></div>
<div class="c" style="left:680.00px;top:407.50px;width:72.5px;height:29.10px;font-size:10.2px;color:#3a3a3a;"><span><span style="font-size:10.35px;letter-spacing:0px;position:relative;top:1.6px">个人计划</span></span></div>
<div class="c" style="left:752.50px;top:407.50px;width:72.0px;height:29.10px;font-size:10.2px;color:#3a3a3a;"><span><span style="font-size:10.35px;letter-spacing:0px;position:relative;top:1.6px">已完成</span></span></div>
<div class="c" style="left:824.50px;top:407.50px;width:57.0px;height:29.10px;font-size:10.2px;color:#2f85dc;"><span><span style="font-size:10.35px;letter-spacing:0px;position:relative;top:1.6px">张鑫</span></span></div>
<div class="c" style="left:881.50px;top:407.50px;width:49.0px;height:29.10px;font-size:10.2px;color:#3a3a3a;"><span><span style="font-size:10.35px;letter-spacing:0px;position:relative;top:1.6px">财务部</span></span></div>
<div class="c" style="left:930.50px;top:407.50px;width:60.5px;height:29.10px;font-size:10.2px;color:#2f85dc;"><span><span style="font-size:10.35px;letter-spacing:0px;position:relative;top:1.6px">张鑫</span></span></div>
<div class="a" style="left:406.00px;top:446.10px;width:11.00px;height:11.00px;background:#fff;border:1px solid #8fbde6;border-radius:2px"></div>
<div class="c" style="left:425.00px;top:436.60px;width:38px;height:29.10px;font-size:10.2px;color:#3a3a3a;"><span><span style="font-size:10.2px;position:relative;top:1.0px">2</span></span></div>
<div class="c" style="left:463.00px;top:436.60px;width:94.5px;height:29.10px;font-size:10.2px;color:#2f85dc;"><span><span style="font-size:10.2px;position:relative;top:1.0px">2020010003</span></span></div>
<div class="l" style="left:566.00px;top:436.60px;height:29.10px;font-size:10.2px;color:#2f85dc;"><span><span style="font-size:10.35px;letter-spacing:0px;position:relative;top:1.6px">财务部工作月度计划</span></span></div>
<div class="c" style="left:680.00px;top:436.60px;width:72.5px;height:29.10px;font-size:10.2px;color:#3a3a3a;"><span><span style="font-size:10.35px;letter-spacing:0px;position:relative;top:1.6px">公司计划</span></span></div>
<div class="c" style="left:752.50px;top:436.60px;width:72.0px;height:29.10px;font-size:10.2px;color:#3a3a3a;"><span><span style="font-size:10.35px;letter-spacing:0px;position:relative;top:1.6px">进行中</span></span></div>
<div class="c" style="left:824.50px;top:436.60px;width:57.0px;height:29.10px;font-size:10.2px;color:#2f85dc;"><span><span style="font-size:10.35px;letter-spacing:0px;position:relative;top:1.6px">张鑫</span></span></div>
<div class="c" style="left:881.50px;top:436.60px;width:49.0px;height:29.10px;font-size:10.2px;color:#3a3a3a;"><span><span style="font-size:10.35px;letter-spacing:0px;position:relative;top:1.6px">财务部</span></span></div>
<div class="c" style="left:930.50px;top:436.60px;width:60.5px;height:29.10px;font-size:10.2px;color:#2f85dc;"><span><span style="font-size:10.35px;letter-spacing:0px;position:relative;top:1.6px">张鑫</span></span></div>
<div class="a" style="left:406.00px;top:475.20px;width:11.00px;height:11.00px;background:#fff;border:1px solid #8fbde6;border-radius:2px"></div>
<div class="c" style="left:425.00px;top:465.70px;width:38px;height:29.10px;font-size:10.2px;color:#3a3a3a;"><span><span style="font-size:10.2px;position:relative;top:1.0px">3</span></span></div>
<div class="c" style="left:463.00px;top:465.70px;width:94.5px;height:29.10px;font-size:10.2px;color:#2f85dc;"><span><span style="font-size:10.2px;position:relative;top:1.0px">2020010002</span></span></div>
<div class="l" style="left:566.00px;top:465.70px;height:29.10px;font-size:10.2px;color:#2f85dc;"><span><span style="font-size:10.35px;letter-spacing:0px;position:relative;top:1.6px">工程项目部月度计划</span></span></div>
<div class="c" style="left:680.00px;top:465.70px;width:72.5px;height:29.10px;font-size:10.2px;color:#3a3a3a;"><span><span style="font-size:10.35px;letter-spacing:0px;position:relative;top:1.6px">公司计划</span></span></div>
<div class="c" style="left:752.50px;top:465.70px;width:72.0px;height:29.10px;font-size:10.2px;color:#3a3a3a;"><span><span style="font-size:10.35px;letter-spacing:0px;position:relative;top:1.6px">进行中</span></span></div>
<div class="c" style="left:824.50px;top:465.70px;width:57.0px;height:29.10px;font-size:10.2px;color:#2f85dc;"><span><span style="font-size:10.35px;letter-spacing:0px;position:relative;top:1.6px">张小东</span></span></div>
<div class="c" style="left:881.50px;top:465.70px;width:49.0px;height:29.10px;font-size:10.2px;color:#3a3a3a;"><span><span style="font-size:10.35px;letter-spacing:0px;position:relative;top:1.6px">工程部</span></span></div>
<div class="c" style="left:930.50px;top:465.70px;width:60.5px;height:29.10px;font-size:10.2px;color:#2f85dc;"><span><span style="font-size:10.35px;letter-spacing:0px;position:relative;top:1.6px">张小东</span></span></div>
<div class="a" style="left:406.00px;top:504.30px;width:11.00px;height:11.00px;background:#fff;border:1px solid #8fbde6;border-radius:2px"></div>
<div class="c" style="left:425.00px;top:494.80px;width:38px;height:29.10px;font-size:10.2px;color:#3a3a3a;"><span><span style="font-size:10.2px;position:relative;top:1.0px">4</span></span></div>
<div class="c" style="left:463.00px;top:494.80px;width:94.5px;height:29.10px;font-size:10.2px;color:#2f85dc;"><span><span style="font-size:10.2px;position:relative;top:1.0px">2020010001</span></span></div>
<div class="l" style="left:566.00px;top:494.80px;height:29.10px;font-size:10.2px;color:#2f85dc;"><span><span style="font-size:10.35px;letter-spacing:0px;position:relative;top:1.6px">日常的行政管理月计划</span></span></div>
<div class="c" style="left:680.00px;top:494.80px;width:72.5px;height:29.10px;font-size:10.2px;color:#3a3a3a;"><span><span style="font-size:10.35px;letter-spacing:0px;position:relative;top:1.6px">公司计划</span></span></div>
<div class="c" style="left:752.50px;top:494.80px;width:72.0px;height:29.10px;font-size:10.2px;color:#3a3a3a;"><span><span style="font-size:10.35px;letter-spacing:0px;position:relative;top:1.6px">未开始</span></span></div>
<div class="c" style="left:824.50px;top:494.80px;width:57.0px;height:29.10px;font-size:10.2px;color:#2f85dc;"><span><span style="font-size:10.35px;letter-spacing:0px;position:relative;top:1.6px">董川民</span></span></div>
<div class="c" style="left:881.50px;top:494.80px;width:49.0px;height:29.10px;font-size:10.2px;color:#3a3a3a;"><span><span style="font-size:10.35px;letter-spacing:0px;position:relative;top:1.6px">行政部</span></span></div>
<div class="c" style="left:930.50px;top:494.80px;width:60.5px;height:29.10px;font-size:10.2px;color:#2f85dc;"><span><span style="font-size:10.35px;letter-spacing:0px;position:relative;top:1.6px">董川民</span></span></div>
<div class="a" style="left:406.00px;top:533.40px;width:11.00px;height:11.00px;background:#fff;border:1px solid #8fbde6;border-radius:2px"></div>
<div class="c" style="left:425.00px;top:523.90px;width:38px;height:29.10px;font-size:10.2px;color:#3a3a3a;"><span><span style="font-size:10.2px;position:relative;top:1.0px">5</span></span></div>
<div class="c" style="left:463.00px;top:523.90px;width:94.5px;height:29.10px;font-size:10.2px;color:#2f85dc;"><span><span style="font-size:10.2px;position:relative;top:1.0px">2019110004</span></span></div>
<div class="l" style="left:566.00px;top:523.90px;height:29.10px;font-size:10.2px;color:#2f85dc;"><span><span style="font-size:10.2px;position:relative;top:1.0px">12</span><span style="font-size:10.35px;letter-spacing:0px;position:relative;top:1.6px">月份计划</span></span></div>
<div class="c" style="left:680.00px;top:523.90px;width:72.5px;height:29.10px;font-size:10.2px;color:#3a3a3a;"><span><span style="font-size:10.35px;letter-spacing:0px;position:relative;top:1.6px">个人计划</span></span></div>
<div class="c" style="left:752.50px;top:523.90px;width:72.0px;height:29.10px;font-size:10.2px;color:#3a3a3a;"><span><span style="font-size:10.35px;letter-spacing:0px;position:relative;top:1.6px">未开始</span></span></div>
<div class="c" style="left:824.50px;top:523.90px;width:57.0px;height:29.10px;font-size:10.2px;color:#2f85dc;"><span><span style="font-size:10.35px;letter-spacing:0px;position:relative;top:1.6px">张鑫</span></span></div>
<div class="c" style="left:881.50px;top:523.90px;width:49.0px;height:29.10px;font-size:10.2px;color:#3a3a3a;"><span><span style="font-size:10.35px;letter-spacing:0px;position:relative;top:1.6px">项目部</span></span></div>
<div class="c" style="left:930.50px;top:523.90px;width:60.5px;height:29.10px;font-size:10.2px;color:#2f85dc;"><span><span style="font-size:10.35px;letter-spacing:0px;position:relative;top:1.6px">张鑫</span></span></div>
<div class="a" style="left:406.00px;top:562.50px;width:11.00px;height:11.00px;background:#fff;border:1px solid #8fbde6;border-radius:2px"></div>
<div class="c" style="left:425.00px;top:553.00px;width:38px;height:29.10px;font-size:10.2px;color:#3a3a3a;"><span><span style="font-size:10.2px;position:relative;top:1.0px">6</span></span></div>
<div class="c" style="left:463.00px;top:553.00px;width:94.5px;height:29.10px;font-size:10.2px;color:#2f85dc;"><span><span style="font-size:10.2px;position:relative;top:1.0px">2019110002</span></span></div>
<div class="l" style="left:566.00px;top:553.00px;height:29.10px;font-size:10.2px;color:#2f85dc;"><span><span style="font-size:10.2px;position:relative;top:1.0px">11</span><span style="font-size:10.35px;letter-spacing:0px;position:relative;top:1.6px">月部门计划</span></span></div>
<div class="c" style="left:680.00px;top:553.00px;width:72.5px;height:29.10px;font-size:10.2px;color:#3a3a3a;"><span><span style="font-size:10.35px;letter-spacing:0px;position:relative;top:1.6px">部门计划</span></span></div>
<div class="c" style="left:752.50px;top:553.00px;width:72.0px;height:29.10px;font-size:10.2px;color:#3a3a3a;"><span><span style="font-size:10.35px;letter-spacing:0px;position:relative;top:1.6px">进行中</span></span></div>
<div class="c" style="left:824.50px;top:553.00px;width:57.0px;height:29.10px;font-size:10.2px;color:#2f85dc;"><span><span style="font-size:10.35px;letter-spacing:0px;position:relative;top:1.6px">张鑫</span></span></div>
<div class="c" style="left:881.50px;top:553.00px;width:49.0px;height:29.10px;font-size:10.2px;color:#3a3a3a;"><span><span style="font-size:10.35px;letter-spacing:0px;position:relative;top:1.6px">人事部</span></span></div>
<div class="c" style="left:930.50px;top:553.00px;width:60.5px;height:29.10px;font-size:10.2px;color:#2f85dc;"><span><span style="font-size:10.35px;letter-spacing:0px;position:relative;top:1.6px">罗丹</span></span></div>
<svg class="a" style="left:868px;top:553px" width="30" height="28" viewBox="0 0 30 28" opacity="0.95">
<path d="M2.3 14 L8.6 3 H18 C14 5.5 11.5 10 11 15 C10.5 19 9.5 21.5 7.7 23.3 Z" fill="#8591ab"/>
<path d="M12.6 18.7 C12.5 13 14 8 17 6 C18.5 5 20 4.3 21.5 4.2 C23.5 6 25 8 26.3 10.8 C21 11 16 14 12.6 18.7 Z" fill="#e0a082"/>
<path d="M12.2 25.4 C13.5 21 16 18 20 16.3 C22 15.5 24 15 25.6 14.9 L21.5 25.4 Z" fill="#8591ab"/>
</svg>
<div class="l" style="left:896.5px;top:554px;height:28px;font-size:23px;-webkit-text-stroke:0.4px #7d8aa5;color:#7d8aa5;opacity:0.92"><span style="letter-spacing:0.6px">泛普软件</span></div>
<div class="l" style="left:872px;top:577px;height:14px;font-family:'Liberation Serif',serif;font-size:13px;-webkit-text-stroke:0.35px #e0a187;color:#e0a187;opacity:0.92;letter-spacing:0.78px">www.fanpusoft.com</div>
</body></html>
